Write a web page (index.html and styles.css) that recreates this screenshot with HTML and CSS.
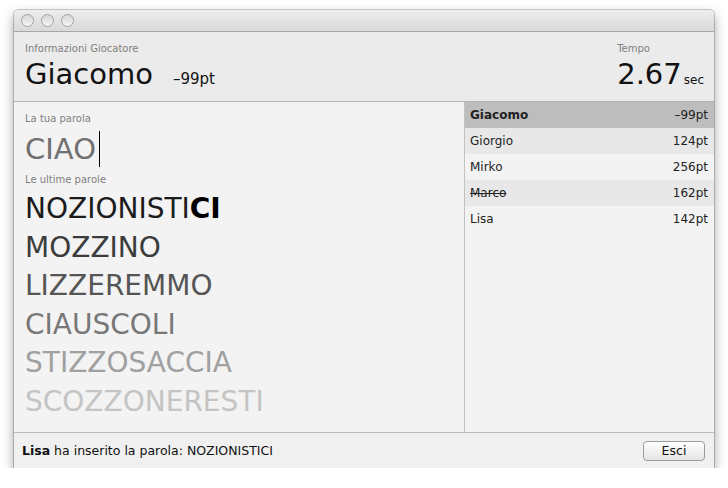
FILE: index.html
```html
<!DOCTYPE html>
<html lang="it">
<head>
<meta charset="utf-8">
<title>Parole</title>
<link rel="stylesheet" href="styles.css">
</head>
<body>
<div class="window">
  <div class="titlebar">
    <span class="light"></span><span class="light"></span><span class="light"></span>
  </div>
  <div class="header">
    <div class="player">
      <div class="label">Informazioni Giocatore</div>
      <div class="big"><span class="name">Giacomo</span><span class="pts">–99pt</span></div>
    </div>
    <div class="time">
      <div class="label">Tempo</div>
      <div class="big">2.67<span class="unit">sec</span></div>
    </div>
  </div>
  <div class="main">
    <div class="words">
      <div class="label">La tua parola</div>
      <div class="input">CIAO<span class="caret"></span></div>
      <div class="label label-recent">Le ultime parole</div>
      <ul class="recent">
        <li class="w1">NOZIONISTI<b>CI</b></li>
        <li class="w2">MOZZINO</li>
        <li class="w3">LIZZEREMMO</li>
        <li class="w4">CIAUSCOLI</li>
        <li class="w5">STIZZOSACCIA</li>
        <li class="w6">SCOZZONERESTI</li>
      </ul>
    </div>
    <ul class="scores">
      <li class="row current"><span>Giacomo</span><span>–99pt</span></li>
      <li class="row alt"><span>Giorgio</span><span>124pt</span></li>
      <li class="row"><span>Mirko</span><span>256pt</span></li>
      <li class="row alt"><span class="out">Marco</span><span>162pt</span></li>
      <li class="row"><span>Lisa</span><span>142pt</span></li>
    </ul>
  </div>
  <div class="footer">
    <span class="msg"><b>Lisa</b> ha inserito la parola: NOZIONISTICI</span>
    <button class="btn" type="button">Esci</button>
  </div>
</div>
</body>
</html>
```

FILE: styles.css
```css
* { box-sizing: border-box; }

html, body {
  margin: 0;
  background: #ffffff;
}

body {
  padding: 10px 0 0 14px;
  font-family: "DejaVu Sans", "Liberation Sans", sans-serif;
  color: #1e1e1e;
}

.window {
  width: 700px;
  height: 458px;
  display: flex;
  flex-direction: column;
  background: #f3f3f3;
  border-radius: 4px 4px 0 0;
  box-shadow: 0 0 0 1px rgba(0, 0, 0, 0.18), 0 5px 12px rgba(0, 0, 0, 0.38);
}

.titlebar {
  height: 22px;
  flex: none;
  display: flex;
  align-items: center;
  gap: 7px;
  padding: 0 0 0 7px;
  background: linear-gradient(#ededed, #d9d9d9);
  border-bottom: 1px solid #a8a8a8;
  border-radius: 4px 4px 0 0;
}

.light {
  width: 13px;
  height: 13px;
  border-radius: 50%;
  border: 1px solid #a3a3a3;
  background: linear-gradient(#d6d6d6, #f6f6f6);
}

.header {
  height: 70px;
  flex: none;
  display: flex;
  justify-content: space-between;
  padding: 11px 10px 0 11px;
  background: #ebebeb;
  border-bottom: 1px solid #b4b4b4;
}

.label {
  font-size: 10px;
  line-height: 12px;
  color: #808080;
}

.big {
  margin-top: 2px;
  font-size: 29px;
  line-height: 34px;
  color: #111;
  white-space: nowrap;
}

.pts {
  margin-left: 20px;
  font-size: 15px;
}

.unit {
  margin-left: 2px;
  font-size: 12px;
}

.main {
  flex: 1;
  display: flex;
  min-height: 0;
}

.words {
  width: 450px;
  flex: none;
  padding: 11px 0 0 11px;
}

.input {
  margin-top: 6px;
  font-size: 29px;
  line-height: 36px;
  height: 36px;
  color: #707070;
}

.caret {
  display: inline-block;
  width: 1px;
  height: 36px;
  margin-left: 3px;
  vertical-align: top;
  background: #000;
}

.label-recent {
  margin-top: 7px;
}

.recent {
  list-style: none;
  margin: 4px 0 0;
  padding: 0;
  font-size: 28px;
  line-height: 38.6px;
}

.w1 { color: #1c1c1c; }
.w1 b { color: #000; }
.w2 { color: #3c3c3c; }
.w3 { color: #555555; }
.w4 { color: #787878; }
.w5 { color: #a0a0a0; }
.w6 { color: #c4c4c4; }

.scores {
  flex: 1;
  list-style: none;
  margin: 0;
  padding: 0;
  border-left: 1px solid #c2c2c2;
  font-size: 12px;
  color: #222;
}

.row {
  height: 26px;
  display: flex;
  align-items: center;
  justify-content: space-between;
  padding: 0 6px 0 5px;
  background: #f3f3f3;
}

.row.alt { background: #e8e8e8; }

.row.current {
  background: #bdbdbd;
  font-weight: bold;
}

.row.current span:last-child { font-weight: normal; }

.out { text-decoration: line-through; }

.footer {
  height: 36px;
  flex: none;
  display: flex;
  align-items: center;
  justify-content: space-between;
  padding: 0 9px 0 8px;
  border-top: 1px solid #bcbcbc;
  background: #f0f0f0;
  font-size: 12.5px;
  color: #111;
}

.btn {
  width: 62px;
  height: 20px;
  padding: 0;
  font-family: inherit;
  font-size: 12.5px;
  color: #111;
  border: 1px solid #9c9c9c;
  border-radius: 4px;
  background: linear-gradient(#ffffff, #e4e4e4);
}
```
